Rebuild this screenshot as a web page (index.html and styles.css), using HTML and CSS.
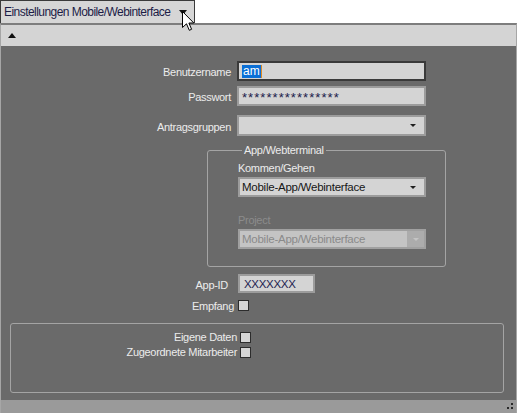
FILE: index.html
```html
<!DOCTYPE html>
<html>
<head>
<meta charset="utf-8">
<link rel="stylesheet" href="styles.css">
</head>
<body>
<div class="tabrow">
  <div class="tab">
    <span class="tab-text">Einstellungen Mobile/Webinterface</span>
    <span class="tab-arrow"></span>
  </div>
</div>
<div class="panel">
  <div class="collapsebar"><span class="up-arrow"></span></div>
  <div class="content">
    <div class="row r1">
      <span class="label">Benutzername</span>
      <div class="input focused"><span class="sel">am</span><span class="caret"></span></div>
    </div>
    <div class="row r2">
      <span class="label">Passwort</span>
      <div class="input"><span class="pw">****************</span></div>
    </div>
    <div class="row r3">
      <span class="label">Antragsgruppen</span>
      <div class="combo"><span class="combo-text"></span><span class="combo-arrow"></span></div>
    </div>
    <fieldset class="group">
      <legend>App/Webterminal</legend>
      <div class="glabel">Kommen/Gehen</div>
      <div class="combo inner"><span class="combo-text">Mobile-App/Webinterface</span><span class="combo-arrow"></span></div>
      <div class="glabel disabled">Project</div>
      <div class="combo inner dis"><span class="combo-text">Mobile-App/Webinterface</span><span class="combo-btn"><span class="combo-arrow light"></span></span></div>
    </fieldset>
    <div class="row r4">
      <span class="label lab-appid">App-ID</span>
      <div class="input small"><span class="val">XXXXXXX</span></div>
    </div>
    <div class="row r5">
      <span class="label lab-empf">Empfang</span>
      <span class="check"></span>
    </div>
    <div class="lowgroup">
      <div class="row r6">
        <span class="label lab-low">Eigene Daten</span>
        <span class="check"></span>
      </div>
      <div class="row r7">
        <span class="label lab-low">Zugeordnete Mitarbeiter</span>
        <span class="check"></span>
      </div>
    </div>
  </div>
  <div class="footer"><span class="grip"><i class="d1"></i><i class="d2"></i><i class="d3"></i></span></div>
</div>
<svg class="cursor" width="14" height="21" viewBox="0 0 14 21">
  <path d="M0.5 0.5 L0.5 16.5 L4.5 12.8 L7.3 19.3 L9.6 18.3 L6.9 12 L11.8 12 Z" fill="#ffffff" stroke="#000000" stroke-width="1" stroke-linejoin="miter"/>
</svg>
</body>
</html>
```
FILE: styles.css
```css
* { box-sizing: border-box; }
html, body { margin: 0; padding: 0; }
body {
  width: 517px;
  height: 413px;
  background: #ffffff;
  font-family: "Liberation Sans", Arial, sans-serif;
  font-size: 11px;
  position: relative;
  overflow: hidden;
}
.tabrow { height: 23px; }
.tab {
  width: 195px;
  height: 23px;
  background: #d6d6d6;
  border: 1px solid #3a3a3a;
  border-bottom: none;
  display: flex;
  align-items: center;
  padding-left: 3px;
}
.tab-text {
  color: #1c1c46;
  font-size: 12px;
  letter-spacing: -0.55px;
}
.tab-arrow {
  margin-left: 9px;
  width: 0; height: 0;
  border-left: 4.5px solid transparent;
  border-right: 4.5px solid transparent;
  border-top: 5px solid #101010;
  margin-top: 1px;
}
.panel {
  border-top: 2px solid #7d7d7d;
  border-left: 1px solid #a6a6a6;
  border-right: 1px solid #a6a6a6;
  background: #6a6a6a;
}
.collapsebar {
  height: 21px;
  background: #d4d4d4;
  display: flex;
  align-items: center;
  padding-left: 7px;
}
.up-arrow {
  width: 0; height: 0;
  border-left: 4.5px solid transparent;
  border-right: 4.5px solid transparent;
  border-bottom: 5px solid #101010;
}
.content {
  height: 354px;
  display: flex;
  flex-direction: column;
  padding-top: 15px;
}
.row { display: flex; align-items: center; gap: 6px; }
.label {
  width: 230px;
  text-align: right;
  color: #ececec;
  letter-spacing: -0.3px;
  line-height: 14px;
  padding-top: 2px;
}
.input {
  width: 189px;
  height: 20px;
  background: #d4d4d4;
  border: 2px solid #9c9c9c;
  display: flex;
  align-items: center;
  padding-left: 3px;
  color: #1c1c50;
}
.input.focused { border-color: #3a3a3a; }
.sel {
  background: #0a6fd6;
  color: #ffffff;
  line-height: 13px;
  padding: 0 1px;
  font-size: 12px;
}
.caret { width: 1px; height: 13px; background: #e08a20; }
.pw { font-size: 13px; letter-spacing: 1.05px; line-height: 12px; margin-top: 3px; color: #20204a; }
.r2 { margin-top: 5px; }
.r3 { margin-top: 9px; }
.combo {
  width: 189px;
  height: 21px;
  background: #d4d4d4;
  border: 2px solid #9c9c9c;
  display: flex;
  align-items: center;
  justify-content: space-between;
  padding-left: 2px;
  padding-right: 8px;
  color: #161616;
}
.combo-text { letter-spacing: -0.25px; font-size: 11.5px; }
.combo-arrow {
  width: 0; height: 0;
  border-left: 3px solid transparent;
  border-right: 3px solid transparent;
  border-top: 3px solid #202020;
}
.combo-arrow.light { border-top-color: #c4c4c4; }
.group {
  margin: 7px 0 0 206px;
  width: 239px;
  height: 124px;
  border: 1px solid #a4a4a4;
  border-radius: 3px;
  padding: 4px 0 0 30px;
  min-width: 0;
}
.group legend {
  color: #ececec;
  padding: 0 2px;
  margin-left: 4px;
  line-height: 14px;
  letter-spacing: -0.3px;
}
.glabel {
  color: #ececec;
  line-height: 14px;
  letter-spacing: -0.3px;
}
.glabel.disabled { color: #8c8c8c; margin-top: 16px; }
.combo.inner { width: 188px; height: 20px; margin-top: 2px; }
.combo.dis {
  background: #c4c4c4;
  border-color: #a0a0a0;
  color: #8a8a8a;
  padding-right: 0;
  margin-top: 2px;
}
.combo-btn {
  width: 17px;
  height: 16px;
  background: #acacac;
  display: flex;
  align-items: center;
  justify-content: center;
}
.r4 { margin-top: 7px; }
.lab-appid { width: 227px; padding-right: 0; }
.r4 { gap: 10px; }
.input.small { width: 77px; height: 19px; padding-left: 4px; }
.val { letter-spacing: -0.3px; font-size: 11.5px; }
.r5 { margin-top: 4px; gap: 4px; }
.lab-empf { width: 233px; }
.check {
  width: 11px;
  height: 11px;
  background: #d6d6d6;
  border: 1px solid #2c2c2c;
}
.lowgroup {
  margin: 10px 0 0 9px;
  width: 494px;
  height: 70px;
  border: 1px solid #a4a4a4;
  border-radius: 3px;
  padding-top: 6px;
}
.lowgroup .label { line-height: 13px; padding-top: 1px; }
.lab-low { width: 226px; }
.lowgroup .row { gap: 3px; }
.r7 { margin-top: 1px; }
.footer {
  height: 13px;
  background: #9a9a9a;
  position: relative;
}
.grip i {
  position: absolute;
  width: 2px; height: 2px;
  background: #2a2a2a;
}
.grip .d1 { right: 3px; top: 3px; }
.grip .d2 { right: 3px; top: 7px; }
.grip .d3 { right: 7px; top: 7px; }
.cursor {
  position: absolute;
  left: 182px;
  top: 11px;
}
```
